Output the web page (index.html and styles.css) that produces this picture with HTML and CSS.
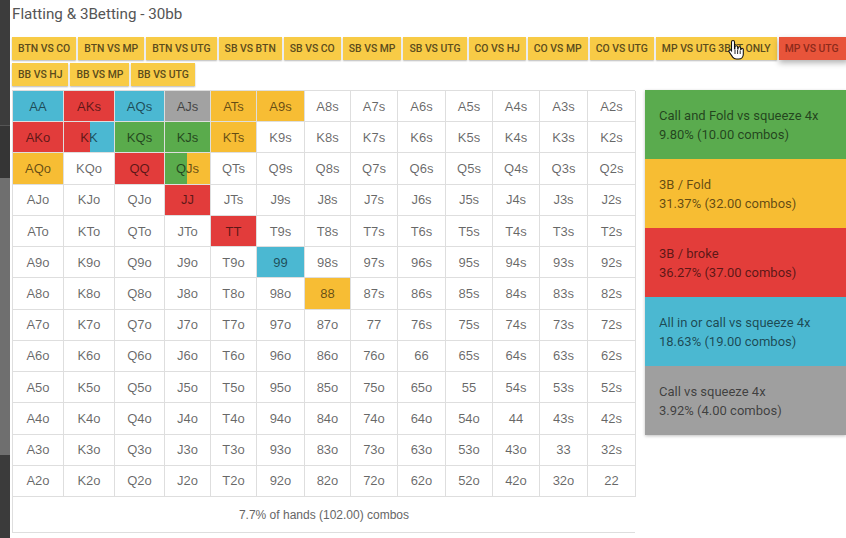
FILE: index.html
```html
<!DOCTYPE html>
<html>
<head>
<meta charset="utf-8">
<link rel="stylesheet" href="styles.css">
</head>
<body>
<div class="page">
  <div class="sidebar">
    <div class="sb-a"></div>
    <div class="sb-b"></div>
    <div class="sb-c"></div>
    <div class="sb-d"></div>
  </div>
  <div class="main">
    <h1 class="title">Flatting &amp; 3Betting - 30bb</h1>
    <div class="buttons">
      <div class="btn-row">
        <span class="btn">BTN VS CO</span>
        <span class="btn">BTN VS MP</span>
        <span class="btn">BTN VS UTG</span>
        <span class="btn">SB VS BTN</span>
        <span class="btn">SB VS CO</span>
        <span class="btn">SB VS MP</span>
        <span class="btn">SB VS UTG</span>
        <span class="btn">CO VS HJ</span>
        <span class="btn">CO VS MP</span>
        <span class="btn">CO VS UTG</span>
        <span class="btn btn-hover">MP VS UTG 3BET ONLY
          <svg class="cursor" width="16" height="22" viewBox="0 0 16 22">
            <path d="M5 1.5c.9 0 1.5.6 1.5 1.5v7h.4V8.2c0-.9.6-1.4 1.4-1.4s1.4.5 1.4 1.4V10h.4V9c0-.8.6-1.3 1.3-1.3s1.3.5 1.3 1.3v1.4h.3c0-.7.5-1.1 1.1-1.1.7 0 1.2.5 1.2 1.2v4.7c0 2.6-1.8 4.8-4.6 4.8H8.2c-1.5 0-2.6-.7-3.5-1.9L1.2 13c-.5-.7-.3-1.5.3-1.9.6-.4 1.3-.3 1.8.3l.2.3V3c0-.9.6-1.5 1.5-1.5z" fill="#fff" stroke="#111" stroke-width="1.1"/>
            <path d="M7 11v4M9.6 11v4M12.2 11.4v3.6" stroke="#111" stroke-width="0.9"/>
          </svg>
        </span>
        <span class="btn btn-active">MP VS UTG</span>
      </div>
      <div class="btn-row">
        <span class="btn">BB VS HJ</span>
        <span class="btn">BB VS MP</span>
        <span class="btn">BB VS UTG</span>
      </div>
    </div>
    <div class="content">
      <div class="range">
        <div class="grid" id="grid"></div>
        <div class="footer">7.7% of hands (102.00) combos</div>
      </div>
      <div class="legend">
        <div class="leg leg-green"><span>Call and Fold vs squeeze 4x</span><span>9.80% (10.00 combos)</span></div>
        <div class="leg leg-yellow"><span>3B / Fold</span><span>31.37% (32.00 combos)</span></div>
        <div class="leg leg-red"><span>3B / broke</span><span>36.27% (37.00 combos)</span></div>
        <div class="leg leg-blue"><span>All in or call vs squeeze 4x</span><span>18.63% (19.00 combos)</span></div>
        <div class="leg leg-gray"><span>Call vs squeeze 4x</span><span>3.92% (4.00 combos)</span></div>
      </div>
    </div>
  </div>
</div>
<script src="app.js"></script>
</body>
</html>
```

FILE: app.js
```js
(function () {
  var ranks = ['A','K','Q','J','T','9','8','7','6','5','4','3','2'];
  var colors = {
    'AA':'blue','AKs':'red','AQs':'blue','AJs':'gray','ATs':'yellow','A9s':'yellow',
    'AKo':'red','KK':'split-rb','KQs':'green','KJs':'green','KTs':'yellow',
    'AQo':'yellow','QQ':'red','QJs':'split-gy',
    'JJ':'red','TT':'red','99':'blue','88':'yellow'
  };
  var grid = document.getElementById('grid');
  for (var r = 0; r < 13; r++) {
    for (var c = 0; c < 13; c++) {
      var name;
      if (r === c) name = ranks[r] + ranks[c];
      else if (c > r) name = ranks[r] + ranks[c] + 's';
      else name = ranks[c] + ranks[r] + 'o';
      var d = document.createElement('div');
      d.className = 'cell' + (colors[name] ? ' c-' + colors[name] : '');
      d.textContent = name;
      grid.appendChild(d);
    }
  }
})();
```

FILE: styles.css
```css
html, body {
  margin: 0;
  padding: 0;
  background: #fff;
  overflow: hidden;
}
.page {
  display: flex;
  width: 846px;
  height: 538px;
  overflow: hidden;
}
.sidebar {
  width: 10px;
  flex: none;
  display: flex;
  flex-direction: column;
}
.sb-a { height: 125px; background: #3c3c3c; border-bottom: 1px solid #555; }
.sb-b { height: 52px; background: #353535; }
.sb-c { height: 277px; background: #6f6f6f; }
.sb-d { flex: 1; background: #3b3b3b; }
.main {
  flex: 1;
  padding-left: 2px;
  min-width: 0;
}
.title {
  margin: 0;
  height: 37px;
  padding-top: 4px;
  box-sizing: border-box;
  font-family: Roboto, "Liberation Sans", sans-serif;
  font-weight: 400;
  font-size: 15.2px;
  line-height: 20px;
  color: #555;
}
.buttons {
  display: flex;
  flex-direction: column;
  gap: 3px;
}
.btn-row {
  display: flex;
  gap: 2px;
  white-space: nowrap;
}
.btn {
  position: relative;
  display: block;
  flex: none;
  height: 23px;
  line-height: 23px;
  padding: 0 6px;
  background: #f8cb46;
  color: #5b4c1c;
  font-family: Roboto, "Liberation Sans", sans-serif;
  font-weight: 500;
  font-size: 10.4px;
  box-shadow: 0 1px 1.5px rgba(0,0,0,0.28);
}
.btn-active {
  background: #e8543a;
  color: #8c2a1a;
  padding: 0 10px 0 6px;
  box-shadow: 0 3px 6px rgba(0,0,0,0.3);
}
.cursor {
  position: absolute;
  left: 72px;
  top: 2px;
}
.content {
  display: flex;
  gap: 10px;
  margin-top: 4px;
}
.range {
  width: 623px;
  flex: none;
}
.grid {
  display: grid;
  grid-template-columns: 51px 51px 50px 46px 46px 48px 46px 47px 48px 47px 47px 48px 48px;
  grid-template-rows: repeat(13, 1fr);
  height: 407px;
  border-left: 1px solid #dedede;
  border-top: 1px solid #dedede;
  box-sizing: border-box;
}
.cell {
  border-right: 1px solid #dedede;
  border-bottom: 1px solid #dedede;
  display: flex;
  align-items: center;
  justify-content: center;
  font-family: "Liberation Sans", Arial, sans-serif;
  font-size: 13px;
  color: rgba(0,0,0,0.6);
}
.c-blue { background: #4bb8d2; }
.c-red { background: #e23c3b; }
.c-green { background: #5aab4c; }
.c-gray { background: #a2a2a2; }
.c-yellow { background: #f7bd34; }
.c-split-rb { background: linear-gradient(90deg, #e23c3b 52%, #4bb8d2 52%); }
.c-split-gy { background: linear-gradient(90deg, #5aab4c 50%, #f7bd34 50%); }
.footer {
  height: 36px;
  border-left: 1px solid #dedede;
  border-bottom: 1px solid #dedede;
  box-sizing: border-box;
  display: flex;
  align-items: center;
  justify-content: center;
  font-family: "Liberation Sans", Arial, sans-serif;
  font-size: 12px;
  color: #666;
}
.legend {
  flex: 1;
  min-width: 0;
  display: flex;
  flex-direction: column;
  align-self: flex-start;
  box-shadow: 0 1px 3px rgba(0,0,0,0.25);
}
.leg {
  height: 69px;
  box-sizing: border-box;
  padding-left: 14px;
  display: flex;
  flex-direction: column;
  justify-content: center;
  font-family: Roboto, "Liberation Sans", sans-serif;
  font-size: 13px;
  line-height: 19px;
  color: rgba(0,0,0,0.62);
  white-space: nowrap;
}
.leg-green { background: #5aab4e; }
.leg-yellow { background: #f7bd33; }
.leg-red { background: #e33d3a; }
.leg-blue { background: #4bb8d1; }
.leg-gray { background: #9f9f9f; }
```
